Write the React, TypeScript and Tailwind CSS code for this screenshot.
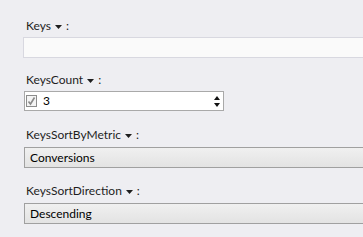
import React from 'react';

const Caret: React.FC = () => (
    <svg width="7" height="4" viewBox="0 0 7 4" className="ml-[4px] mr-[4px] mt-[2px]">
        <path d="M0 0 H7 L3.5 4 Z" fill="#1e1e1e" />
    </svg>
);

const Label: React.FC<{ text: string; className?: string }> = ({ text, className }) => (
    <div className={`flex items-center h-[16px] pl-[3px] text-[#1e1e1e] ${className ?? ''}`}>
        <span>{text}</span>
        <Caret />
        <span>:</span>
    </div>
);

const ComboBox: React.FC<{ value: string; className?: string }> = ({ value, className }) => (
    <div
        className={`flex items-center h-[21px] w-[360px] ml-[1px] pl-[5px] border-y border-l border-[#a0a0a0] bg-gradient-to-b from-[#f0f0f0] to-[#e3e3e3] text-black ${className ?? ''}`}
    >
        {value}
    </div>
);

const App: React.FC = () => {
    return (
        <div
            className="w-[363px] h-[237px] overflow-hidden bg-[#eeeef2] pl-[23px] pt-[18px] text-[12px]"
            style={{ fontFamily: 'Lato, "Open Sans", sans-serif' }}
        >
            <Label text="Keys" />
            <div className="mt-[3px] h-[21px] w-[360px] border-y border-l border-[#d8d8e0] bg-[#fafafa]" />

            <Label text="KeysCount" className="mt-[14px]" />
            <div className="mt-[3px] ml-[1px] flex items-center h-[20px] w-[200px] border border-[#a9a9a9] bg-white">
                <svg width="12" height="12" viewBox="0 0 12 12" className="ml-[1px]">
                    <rect x="0.5" y="0.5" width="10" height="11" fill="#f4f4f4" stroke="#8c8c8c" />
                    <path d="M2.5 6.5 L4.5 9 L8.5 2.5" fill="none" stroke="#8a8a8a" strokeWidth="1.6" />
                </svg>
                <span className="ml-[5px] text-black">3</span>
                <div className="ml-auto mr-[3px] flex flex-col gap-[3px]">
                    <svg width="6" height="4" viewBox="0 0 6 4">
                        <path d="M3 0 L6 4 H0 Z" fill="#111" />
                    </svg>
                    <svg width="6" height="4" viewBox="0 0 6 4">
                        <path d="M0 0 H6 L3 4 Z" fill="#111" />
                    </svg>
                </div>
            </div>

            <Label text="KeysSortByMetric" className="mt-[16px]" />
            <ComboBox value="Conversions" className="mt-[4px]" />

            <Label text="KeysSortDirection" className="mt-[15px]" />
            <ComboBox value="Descending" className="mt-[4px]" />
        </div>
    );
};

export default App;
